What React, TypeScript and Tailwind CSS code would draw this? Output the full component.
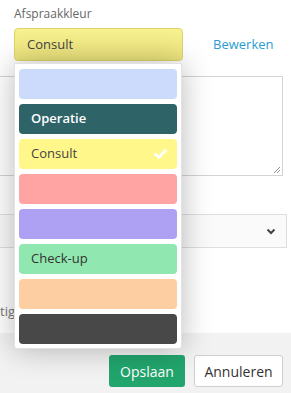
import { useState } from 'react';

const COLORS = [
  { bg: 'bg-[#ccdafc]', label: '', text: '' },
  { bg: 'bg-[#2e6468]', label: 'Operatie', text: 'text-white font-semibold' },
  { bg: 'bg-[#fff78a]', label: 'Consult', text: 'text-[#444]' },
  { bg: 'bg-[#ffa3a3]', label: '', text: '' },
  { bg: 'bg-[#aea0f2]', label: '', text: '' },
  { bg: 'bg-[#90e8b0]', label: 'Check-up', text: 'text-[#333]' },
  { bg: 'bg-[#fdcea1]', label: '', text: '' },
  { bg: 'bg-[#484848]', label: '', text: '' },
];

function Check() {
  return (
    <svg width="13" height="10" viewBox="0 0 13 10" className="text-white">
      <path d="M1.5 5.2 L4.8 8.4 L11.5 1.6" fill="none" stroke="currentColor" strokeWidth="2.8" strokeLinecap="round" strokeLinejoin="round" />
    </svg>
  );
}

export default function App() {
  const [selected, setSelected] = useState('Consult');

  return (
    <main className="relative w-[291px] h-[393px] overflow-hidden bg-white font-['Open_Sans',sans-serif] text-[13px]">
      {/* Form body */}
      <div className="h-[333px] flex flex-col">
        <p className="pl-[14px] pt-[5px] text-[12px] text-[#666] leading-[17px]">Afspraakkleur</p>
        <div className="flex items-center pl-[14px] mt-[6px]">
          <div className="w-[169px] h-[33px] rounded-[4px] border border-[#dcd46a] bg-gradient-to-b from-[#f7f190] to-[#ede47c] flex items-center pl-[12px] text-[13px] text-[#444]">
            {selected}
          </div>
          <a className="ml-[30px] text-[#2a9bd5] text-[13px]">Bewerken</a>
        </div>

        <div className="relative mt-[15px] mr-[8px] h-[100px] border border-l-0 border-[#d4d4d4] bg-white">
          <svg width="8" height="8" viewBox="0 0 8 8" className="absolute right-[1px] bottom-[1px]">
            <path d="M7 1 L1 7 M7 4 L4 7" stroke="#777" strokeWidth="0.8" />
          </svg>
        </div>

        <div className="mt-[38px] mr-[4px] h-[34px] border border-l-0 border-[#dedede] bg-[#fafafa] flex items-center justify-end pr-[10px]">
          <svg width="10" height="7" viewBox="0 0 10 7">
            <path d="M1.5 1.5 L5 5 L8.5 1.5" fill="none" stroke="#444" strokeWidth="2" />
          </svg>
        </div>

        <p className="mt-[57px] text-[13px] text-[#777] leading-none">tig</p>
      </div>

      {/* Footer */}
      <div className="h-[60px] bg-[#f2f2f2] flex justify-end items-start pt-[22px] pr-[8px] gap-[9px]">
        <button className="w-[76px] h-[32px] rounded-[3px] bg-[#22a56d] text-white text-[14px]">Opslaan</button>
        <button className="w-[89px] h-[32px] rounded-[3px] border border-[#cfcfcf] bg-white text-[#333] text-[14px]">Annuleren</button>
      </div>

      {/* Open colour dropdown */}
      <div className="absolute left-[14px] top-[63px] w-[168px] bg-white border border-[#e2e2e2] rounded-b-[3px] px-[4px] pt-[5px] pb-[4px] flex flex-col gap-[5px] shadow-[0_0_30px_rgba(0,0,0,0.28)]">
        {COLORS.map((c, i) => (
          <button
            key={i}
            onClick={() => c.label && setSelected(c.label)}
            className={`h-[30px] rounded-[4px] flex items-center justify-between pl-[12px] pr-[10px] text-[13px] ${c.bg} ${c.text}`}
          >
            <span>{c.label}</span>
            {c.label === selected && <Check />}
          </button>
        ))}
      </div>
    </main>
  );
}
